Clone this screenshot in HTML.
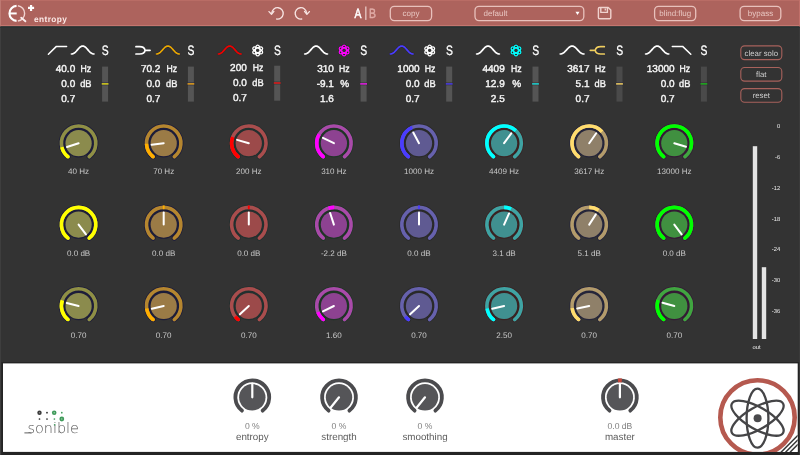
<!DOCTYPE html>
<html lang="en"><head><meta charset="utf-8"><title>EQ+ entropy</title>
<style>html,body{margin:0;padding:0;background:#333;overflow:hidden}svg{display:block;will-change:transform}text{font-family:"Liberation Sans", sans-serif;text-rendering:geometricPrecision}.v{font-size:10px;fill:#f6f6f6;stroke:#f6f6f6;stroke-width:0.4px}.kl{font-size:8.05px;fill:#c8c8c8;text-anchor:middle}.hb{font-size:8px;fill:#e8c6c1;text-anchor:middle}.sb{font-size:7.8px;fill:#cfcfcf;text-anchor:middle}.ml{font-size:5.8px;fill:#f0f0f0;text-anchor:end}.bv{font-size:8.6px;fill:#808080;text-anchor:middle}.bl{font-size:9.8px;fill:#5c5c5c;text-anchor:middle}</style></head><body>
<svg width="800" height="455" viewBox="0 0 800 455">
<rect width="800" height="455" fill="#333333"/>
<rect x="0" y="27" width="1" height="428" fill="#3e3e3e"/>
<rect x="799" y="27" width="1" height="428" fill="#3a3a3a"/>
<g id="header">
<rect x="0" y="0" width="800" height="26.3" fill="#ad635d"/>
<rect x="0" y="0" width="800" height="1" fill="#b96c65"/>
<rect x="0" y="25" width="800" height="1.3" fill="#c3766f"/>
<rect x="0" y="26.3" width="800" height="1.4" fill="#263233"/>
<rect x="0" y="0" width="1" height="26.3" fill="#be7972"/>
<rect x="799" y="0" width="1" height="26.4" fill="#c0706a"/>
<g fill="none" stroke-linecap="butt">
<path d="M16.56 5.91A7.5 7.5 0 0 0 16.56 20.89" stroke="#fff" stroke-width="2.1"/>
<path d="M9.8 13.45H16.7" stroke="#fff" stroke-width="2"/>
<path d="M17.89 5.76A7.7 7.7 0 0 1 17.89 21.04" stroke="#f1d3d0" stroke-width="1.4"/>
<path d="M21.2 17.7L25.4 21.3" stroke="#fbeeee" stroke-width="1.8" stroke-linecap="round"/>
</g>
<path d="M28 7.95H34.1M31.05 5V11" stroke="#fff" stroke-width="2.2" fill="none"/>
<text x="34" y="22.2" font-size="8.3" font-weight="bold" fill="#fbe9e7" letter-spacing="0.4">entropy</text>
<g transform="translate(277.4 13.3) scale(1 1)" fill="none" stroke="#f7e4e2" stroke-width="1.35" stroke-linecap="round" stroke-linejoin="round"><path d="M-5.57 -0.50A5.7 5.7 0 1 1 -0.69 5.74"/><path d="M-8.4 -1.7L-5.9 0.9L-3.5 -1.9"/></g>
<g transform="translate(301.0 13.3) scale(-1 1)" fill="none" stroke="#f7e4e2" stroke-width="1.35" stroke-linecap="round" stroke-linejoin="round"><path d="M-5.57 -0.50A5.7 5.7 0 1 1 -0.69 5.74"/><path d="M-8.4 -1.7L-5.9 0.9L-3.5 -1.9"/></g>
<text x="354.4" y="17.95" font-size="13.4" fill="#fff" stroke="#fff" stroke-width="0.55" textLength="6.9" lengthAdjust="spacingAndGlyphs">A</text>
<rect x="365.3" y="6.5" width="1.1" height="13.4" fill="#f2dcd9"/>
<text x="369" y="17.95" font-size="13.4" fill="#e0aca7" stroke="#e0aca7" stroke-width="0.45" textLength="7" lengthAdjust="spacingAndGlyphs">B</text>
<rect x="390.3" y="6.4" width="41.3" height="14.2" rx="4" fill="none" stroke="#e8c1bc" stroke-width="1.3"/><text class="hb" x="411.0" y="16.1">copy</text>
<rect x="475" y="6.4" width="108.8" height="14.2" rx="4" fill="none" stroke="#e8c1bc" stroke-width="1.3"/>
<text class="hb" x="483.5" y="16.1" style="text-anchor:start">default</text>
<path d="M575.5 11.8H579.5L577.5 15Z" fill="#fff"/>
<g fill="none" stroke="#f0d2ce" stroke-width="1.4" stroke-linejoin="round"><path d="M599.6 7.5H608.2L610.8 10.1V17.6Q610.8 18.8 609.6 18.8H599.6Q598.4 18.8 598.4 17.6V8.7Q598.4 7.5 599.6 7.5Z"/><path d="M600.8 7.7V12.4H607.4V7.7"/><path d="M605.3 8.6V10.6" stroke-width="1.3"/></g>
<rect x="654.6" y="6.4" width="41.1" height="14.2" rx="4" fill="none" stroke="#e8c1bc" stroke-width="1.3"/><text class="hb" x="675.2" y="16.1">blind:flug</text>
<rect x="740.1" y="6.4" width="40.7" height="14.2" rx="4" fill="none" stroke="#e8c1bc" stroke-width="1.3"/><text class="hb" x="760.5" y="16.1">bypass</text>
</g>
<g id="bands">
<g>
<path d="M48.4 54.3L56.4 46.4H66.6" fill="none" stroke="#fff" stroke-width="1.5" stroke-linecap="round" stroke-linejoin="round"/>
<path d="M71.40 54.00L72.21 53.94L73.01 53.72L73.82 53.33L74.63 52.77L75.44 52.05L76.24 51.22L77.05 50.32L77.86 49.39L78.66 48.49L79.47 47.67L80.28 46.97L81.09 46.44L81.89 46.11L82.70 46.00L83.51 46.11L84.31 46.44L85.12 46.97L85.93 47.67L86.74 48.49L87.54 49.39L88.35 50.32L89.16 51.22L89.96 52.05L90.77 52.77L91.58 53.33L92.39 53.72L93.19 53.94L94.00 54.00" fill="none" stroke="#fff" stroke-width="1.7" stroke-linecap="round" stroke-linejoin="round"/>
<text x="101.8" y="54.9" font-size="13.6" fill="#fff" stroke="#fff" stroke-width="0.3" textLength="6.9" lengthAdjust="spacingAndGlyphs">S</text>
</g><g transform="translate(0 0)">
<text class="v" transform="translate(75.2 72.1) scale(1.0 1)" text-anchor="end">40.0</text>
<text class="v" x="80.6" y="72.1" textLength="10.6" lengthAdjust="spacingAndGlyphs">Hz</text>
<text class="v" transform="translate(75.2 87.3) scale(1.0 1)" text-anchor="end">0.0</text>
<text class="v" x="80.2" y="87.3" textLength="11.3" lengthAdjust="spacingAndGlyphs">dB</text>
<text class="v" transform="translate(75.2 102.1) scale(1.0 1)" text-anchor="end">0.7</text>
<rect x="102.1" y="66.6" width="6" height="35" fill="#555555"/>
<rect x="101.5" y="82.6" width="7.2" height="2.6" fill="#1d1d3a"/>
<rect x="101.7" y="83.1" width="6.8" height="1.6" fill="#d8d020"/>
</g>
<g>
<g transform="translate(135.1 0)" fill="none" stroke-linecap="round"><path d="M0.85 46.65H4.6C7.9 46.65 9.6 48.3 10 50.3H14.95M0.85 54H4.6C7.9 54 9.6 52.3 10 50.3" stroke="#fff" stroke-width="1.7"/></g>
<path d="M156.40 54.00L157.22 53.94L158.04 53.72L158.86 53.33L159.69 52.77L160.51 52.05L161.33 51.22L162.15 50.32L162.97 49.39L163.79 48.49L164.61 47.67L165.44 46.97L166.26 46.44L167.08 46.11L167.90 46.00L168.72 46.11L169.54 46.44L170.36 46.97L171.19 47.67L172.01 48.49L172.83 49.39L173.65 50.32L174.47 51.22L175.29 52.05L176.11 52.77L176.94 53.33L177.76 53.72L178.58 53.94L179.40 54.00" fill="none" stroke="#1d1d3a" stroke-width="2.6" stroke-linecap="round" stroke-linejoin="round"/><path d="M156.40 54.00L157.22 53.94L158.04 53.72L158.86 53.33L159.69 52.77L160.51 52.05L161.33 51.22L162.15 50.32L162.97 49.39L163.79 48.49L164.61 47.67L165.44 46.97L166.26 46.44L167.08 46.11L167.90 46.00L168.72 46.11L169.54 46.44L170.36 46.97L171.19 47.67L172.01 48.49L172.83 49.39L173.65 50.32L174.47 51.22L175.29 52.05L176.11 52.77L176.94 53.33L177.76 53.72L178.58 53.94L179.40 54.00" fill="none" stroke="#e8a800" stroke-width="1.7" stroke-linecap="round" stroke-linejoin="round"/>
<text x="187.6" y="54.9" font-size="13.6" fill="#fff" stroke="#fff" stroke-width="0.3" textLength="6.9" lengthAdjust="spacingAndGlyphs">S</text>
</g><g transform="translate(0 0)">
<text class="v" transform="translate(160.4 72.1) scale(1.0 1)" text-anchor="end">70.2</text>
<text class="v" x="166.4" y="72.1" textLength="10.6" lengthAdjust="spacingAndGlyphs">Hz</text>
<text class="v" transform="translate(160.4 87.3) scale(1.0 1)" text-anchor="end">0.0</text>
<text class="v" x="166.0" y="87.3" textLength="11.3" lengthAdjust="spacingAndGlyphs">dB</text>
<text class="v" transform="translate(160.4 102.1) scale(1.0 1)" text-anchor="end">0.7</text>
<rect x="187.9" y="66.6" width="6" height="35" fill="#555555"/>
<rect x="187.3" y="82.6" width="7.2" height="2.6" fill="#1d1d3a"/>
<rect x="187.5" y="83.1" width="6.8" height="1.6" fill="#e0a020"/>
</g>
<g>
<path d="M218.30 54.00L219.11 53.94L219.93 53.72L220.74 53.33L221.56 52.77L222.37 52.05L223.19 51.22L224.00 50.32L224.81 49.39L225.63 48.49L226.44 47.67L227.26 46.97L228.07 46.44L228.89 46.11L229.70 46.00L230.51 46.11L231.33 46.44L232.14 46.97L232.96 47.67L233.77 48.49L234.59 49.39L235.40 50.32L236.21 51.22L237.03 52.05L237.84 52.77L238.66 53.33L239.47 53.72L240.29 53.94L241.10 54.00" fill="none" stroke="#23302f" stroke-width="2.6" stroke-linecap="round" stroke-linejoin="round"/><path d="M218.30 54.00L219.11 53.94L219.93 53.72L220.74 53.33L221.56 52.77L222.37 52.05L223.19 51.22L224.00 50.32L224.81 49.39L225.63 48.49L226.44 47.67L227.26 46.97L228.07 46.44L228.89 46.11L229.70 46.00L230.51 46.11L231.33 46.44L232.14 46.97L232.96 47.67L233.77 48.49L234.59 49.39L235.40 50.32L236.21 51.22L237.03 52.05L237.84 52.77L238.66 53.33L239.47 53.72L240.29 53.94L241.10 54.00" fill="none" stroke="#f00000" stroke-width="1.7" stroke-linecap="round" stroke-linejoin="round"/>
<g fill="none" stroke="#fff" stroke-width="1.25"><ellipse cx="257.7" cy="50.4" rx="2.3" ry="5.4" transform="rotate(0 257.7 50.4)"/><ellipse cx="257.7" cy="50.4" rx="2.3" ry="5.4" transform="rotate(60 257.7 50.4)"/><ellipse cx="257.7" cy="50.4" rx="2.3" ry="5.4" transform="rotate(120 257.7 50.4)"/></g>
<text x="273.9" y="54.9" font-size="13.6" fill="#fff" stroke="#fff" stroke-width="0.3" textLength="6.9" lengthAdjust="spacingAndGlyphs">S</text>
</g><g transform="translate(0 -0.9)">
<text class="v" transform="translate(246.8 72.1) scale(1.0 1)" text-anchor="end">200</text>
<text class="v" x="252.7" y="72.1" textLength="10.6" lengthAdjust="spacingAndGlyphs">Hz</text>
<text class="v" transform="translate(246.8 87.3) scale(1.0 1)" text-anchor="end">0.0</text>
<text class="v" x="252.3" y="87.3" textLength="11.3" lengthAdjust="spacingAndGlyphs">dB</text>
<text class="v" transform="translate(246.8 102.1) scale(1.0 1)" text-anchor="end">0.7</text>
<rect x="274.2" y="66.6" width="6" height="35" fill="#555555"/>
<rect x="273.6" y="82.6" width="7.2" height="2.6" fill="#23302f"/>
<rect x="273.8" y="83.1" width="6.8" height="1.6" fill="#e02020"/>
</g>
<g>
<path d="M304.70 54.00L305.51 53.94L306.33 53.72L307.14 53.33L307.96 52.77L308.77 52.05L309.59 51.22L310.40 50.32L311.21 49.39L312.03 48.49L312.84 47.67L313.66 46.97L314.47 46.44L315.29 46.11L316.10 46.00L316.91 46.11L317.73 46.44L318.54 46.97L319.36 47.67L320.17 48.49L320.99 49.39L321.80 50.32L322.61 51.22L323.43 52.05L324.24 52.77L325.06 53.33L325.87 53.72L326.69 53.94L327.50 54.00" fill="none" stroke="#fff" stroke-width="1.7" stroke-linecap="round" stroke-linejoin="round"/>
<g fill="none" stroke="#0c3a0c" stroke-width="2.2"><ellipse cx="344.1" cy="50.4" rx="2.3" ry="5.4" transform="rotate(0 344.1 50.4)"/><ellipse cx="344.1" cy="50.4" rx="2.3" ry="5.4" transform="rotate(60 344.1 50.4)"/><ellipse cx="344.1" cy="50.4" rx="2.3" ry="5.4" transform="rotate(120 344.1 50.4)"/></g><g fill="none" stroke="#ff00ff" stroke-width="1.25"><ellipse cx="344.1" cy="50.4" rx="2.3" ry="5.4" transform="rotate(0 344.1 50.4)"/><ellipse cx="344.1" cy="50.4" rx="2.3" ry="5.4" transform="rotate(60 344.1 50.4)"/><ellipse cx="344.1" cy="50.4" rx="2.3" ry="5.4" transform="rotate(120 344.1 50.4)"/></g>
<text x="360.3" y="54.9" font-size="13.6" fill="#fff" stroke="#fff" stroke-width="0.3" textLength="6.9" lengthAdjust="spacingAndGlyphs">S</text>
</g><g transform="translate(0 0)">
<text class="v" transform="translate(333.9 72.1) scale(1.0 1)" text-anchor="end">310</text>
<text class="v" x="339.1" y="72.1" textLength="10.6" lengthAdjust="spacingAndGlyphs">Hz</text>
<text class="v" transform="translate(333.9 87.3) scale(1.0 1)" text-anchor="end">-9.1</text>
<text class="v" x="340.3" y="87.3">%</text>
<text class="v" transform="translate(333.9 102.1) scale(1.0 1)" text-anchor="end">1.6</text>
<rect x="360.6" y="66.6" width="6" height="35" fill="#555555"/>
<rect x="360.0" y="82.6" width="7.2" height="2.6" fill="#1f3526"/>
<rect x="360.2" y="83.1" width="6.8" height="1.6" fill="#e020e0"/>
</g>
<g>
<path d="M390.30 54.00L391.11 53.94L391.93 53.72L392.74 53.33L393.56 52.77L394.37 52.05L395.19 51.22L396.00 50.32L396.81 49.39L397.63 48.49L398.44 47.67L399.26 46.97L400.07 46.44L400.89 46.11L401.70 46.00L402.51 46.11L403.33 46.44L404.14 46.97L404.96 47.67L405.77 48.49L406.59 49.39L407.40 50.32L408.21 51.22L409.03 52.05L409.84 52.77L410.66 53.33L411.47 53.72L412.29 53.94L413.10 54.00" fill="none" stroke="#2a2a2a" stroke-width="2.6" stroke-linecap="round" stroke-linejoin="round"/><path d="M390.30 54.00L391.11 53.94L391.93 53.72L392.74 53.33L393.56 52.77L394.37 52.05L395.19 51.22L396.00 50.32L396.81 49.39L397.63 48.49L398.44 47.67L399.26 46.97L400.07 46.44L400.89 46.11L401.70 46.00L402.51 46.11L403.33 46.44L404.14 46.97L404.96 47.67L405.77 48.49L406.59 49.39L407.40 50.32L408.21 51.22L409.03 52.05L409.84 52.77L410.66 53.33L411.47 53.72L412.29 53.94L413.10 54.00" fill="none" stroke="#4a3cff" stroke-width="1.7" stroke-linecap="round" stroke-linejoin="round"/>
<g fill="none" stroke="#fff" stroke-width="1.25"><ellipse cx="429.7" cy="50.4" rx="2.3" ry="5.4" transform="rotate(0 429.7 50.4)"/><ellipse cx="429.7" cy="50.4" rx="2.3" ry="5.4" transform="rotate(60 429.7 50.4)"/><ellipse cx="429.7" cy="50.4" rx="2.3" ry="5.4" transform="rotate(120 429.7 50.4)"/></g>
<text x="445.9" y="54.9" font-size="13.6" fill="#fff" stroke="#fff" stroke-width="0.3" textLength="6.9" lengthAdjust="spacingAndGlyphs">S</text>
</g><g transform="translate(0 0)">
<text class="v" transform="translate(419.6 72.1) scale(1.0 1)" text-anchor="end">1000</text>
<text class="v" x="424.7" y="72.1" textLength="10.6" lengthAdjust="spacingAndGlyphs">Hz</text>
<text class="v" transform="translate(419.6 87.3) scale(1.0 1)" text-anchor="end">0.0</text>
<text class="v" x="424.3" y="87.3" textLength="11.3" lengthAdjust="spacingAndGlyphs">dB</text>
<text class="v" transform="translate(419.6 102.1) scale(1.0 1)" text-anchor="end">0.7</text>
<rect x="446.2" y="66.6" width="6" height="35" fill="#555555"/>
<rect x="445.6" y="82.6" width="7.2" height="2.6" fill="#2a2a2a"/>
<rect x="445.8" y="83.1" width="6.8" height="1.6" fill="#4a3ce0"/>
</g>
<g>
<path d="M476.60 54.00L477.41 53.94L478.23 53.72L479.04 53.33L479.86 52.77L480.67 52.05L481.49 51.22L482.30 50.32L483.11 49.39L483.93 48.49L484.74 47.67L485.56 46.97L486.37 46.44L487.19 46.11L488.00 46.00L488.81 46.11L489.63 46.44L490.44 46.97L491.26 47.67L492.07 48.49L492.89 49.39L493.70 50.32L494.51 51.22L495.33 52.05L496.14 52.77L496.96 53.33L497.77 53.72L498.59 53.94L499.40 54.00" fill="none" stroke="#fff" stroke-width="1.7" stroke-linecap="round" stroke-linejoin="round"/>
<g fill="none" stroke="#3a1010" stroke-width="2.2"><ellipse cx="516.0" cy="50.4" rx="2.3" ry="5.4" transform="rotate(0 516.0 50.4)"/><ellipse cx="516.0" cy="50.4" rx="2.3" ry="5.4" transform="rotate(60 516.0 50.4)"/><ellipse cx="516.0" cy="50.4" rx="2.3" ry="5.4" transform="rotate(120 516.0 50.4)"/></g><g fill="none" stroke="#00ffff" stroke-width="1.25"><ellipse cx="516.0" cy="50.4" rx="2.3" ry="5.4" transform="rotate(0 516.0 50.4)"/><ellipse cx="516.0" cy="50.4" rx="2.3" ry="5.4" transform="rotate(60 516.0 50.4)"/><ellipse cx="516.0" cy="50.4" rx="2.3" ry="5.4" transform="rotate(120 516.0 50.4)"/></g>
<text x="532.2" y="54.9" font-size="13.6" fill="#fff" stroke="#fff" stroke-width="0.3" textLength="6.9" lengthAdjust="spacingAndGlyphs">S</text>
</g><g transform="translate(0 0)">
<text class="v" transform="translate(504.7 72.1) scale(1.0 1)" text-anchor="end">4409</text>
<text class="v" x="511.0" y="72.1" textLength="10.6" lengthAdjust="spacingAndGlyphs">Hz</text>
<text class="v" transform="translate(504.7 87.3) scale(1.0 1)" text-anchor="end">12.9</text>
<text class="v" x="512.2" y="87.3">%</text>
<text class="v" transform="translate(504.7 102.1) scale(1.0 1)" text-anchor="end">2.5</text>
<rect x="532.5" y="66.6" width="6" height="35" fill="#555555"/>
<rect x="531.9" y="82.6" width="7.2" height="2.6" fill="#3a2222"/>
<rect x="532.1" y="83.1" width="6.8" height="1.6" fill="#20d0d0"/>
</g>
<g>
<path d="M560.20 54.00L561.05 53.94L561.90 53.72L562.75 53.33L563.60 52.77L564.45 52.05L565.30 51.22L566.15 50.32L567.00 49.39L567.85 48.49L568.70 47.67L569.55 46.97L570.40 46.44L571.25 46.11L572.10 46.00L572.95 46.11L573.80 46.44L574.65 46.97L575.50 47.67L576.35 48.49L577.20 49.39L578.05 50.32L578.90 51.22L579.75 52.05L580.60 52.77L581.45 53.33L582.30 53.72L583.15 53.94L584.00 54.00" fill="none" stroke="#fff" stroke-width="1.7" stroke-linecap="round" stroke-linejoin="round"/>
<g transform="translate(605.2 0) scale(-1 1)" fill="none" stroke-linecap="round"><path d="M0.85 46.65H4.6C7.9 46.65 9.6 48.3 10 50.3H14.95M0.85 54H4.6C7.9 54 9.6 52.3 10 50.3" stroke="#25253a" stroke-width="2.6"/><path d="M0.85 46.65H4.6C7.9 46.65 9.6 48.3 10 50.3H14.95M0.85 54H4.6C7.9 54 9.6 52.3 10 50.3" stroke="#f0cf5c" stroke-width="1.7"/></g>
<text x="616.2" y="54.9" font-size="13.6" fill="#fff" stroke="#fff" stroke-width="0.3" textLength="6.9" lengthAdjust="spacingAndGlyphs">S</text>
</g><g transform="translate(0 0)">
<text class="v" transform="translate(589.5 72.1) scale(1.0 1)" text-anchor="end">3617</text>
<text class="v" x="595.0" y="72.1" textLength="10.6" lengthAdjust="spacingAndGlyphs">Hz</text>
<text class="v" transform="translate(589.5 87.3) scale(1.0 1)" text-anchor="end">5.1</text>
<text class="v" x="594.6" y="87.3" textLength="11.3" lengthAdjust="spacingAndGlyphs">dB</text>
<text class="v" transform="translate(589.5 102.1) scale(1.0 1)" text-anchor="end">0.7</text>
<rect x="616.5" y="66.6" width="6" height="35" fill="#4a4a4a"/>
<rect x="615.9" y="82.6" width="7.2" height="2.6" fill="#25253a"/>
<rect x="616.1" y="83.1" width="6.8" height="1.6" fill="#e8c860"/>
</g>
<g>
<path d="M645.60 54.00L646.43 53.94L647.26 53.72L648.09 53.33L648.91 52.77L649.74 52.05L650.57 51.22L651.40 50.32L652.23 49.39L653.06 48.49L653.89 47.67L654.71 46.97L655.54 46.44L656.37 46.11L657.20 46.00L658.03 46.11L658.86 46.44L659.69 46.97L660.51 47.67L661.34 48.49L662.17 49.39L663.00 50.32L663.83 51.22L664.66 52.05L665.49 52.77L666.31 53.33L667.14 53.72L667.97 53.94L668.80 54.00" fill="none" stroke="#fff" stroke-width="1.7" stroke-linecap="round" stroke-linejoin="round"/>
<path d="M672.3 46.4H682.6L690.8 54.3" fill="none" stroke="#fff" stroke-width="1.5" stroke-linecap="round" stroke-linejoin="round"/>
<text x="700.6" y="54.9" font-size="13.6" fill="#fff" stroke="#fff" stroke-width="0.3" textLength="6.9" lengthAdjust="spacingAndGlyphs">S</text>
</g><g transform="translate(0 0)">
<text class="v" transform="translate(674.6 72.1) scale(1.0 1)" text-anchor="end">13000</text>
<text class="v" x="679.4" y="72.1" textLength="10.6" lengthAdjust="spacingAndGlyphs">Hz</text>
<text class="v" transform="translate(674.6 87.3) scale(1.0 1)" text-anchor="end">0.0</text>
<text class="v" x="679.0" y="87.3" textLength="11.3" lengthAdjust="spacingAndGlyphs">dB</text>
<text class="v" transform="translate(674.6 102.1) scale(1.0 1)" text-anchor="end">0.7</text>
<rect x="700.9" y="66.6" width="6" height="35" fill="#4a4a4a"/>
<rect x="700.3" y="82.6" width="7.2" height="2.6" fill="#351a35"/>
<rect x="700.5" y="83.1" width="6.8" height="1.6" fill="#20b020"/>
</g>
</g>
<g id="side">
<rect x="740.8" y="45.9" width="41" height="13.7" rx="3.8" fill="none" stroke="#a8625c" stroke-width="1.1"/>
<text class="sb" x="761.3" y="55.5">clear solo</text>
<rect x="740.8" y="67.5" width="41" height="13.6" rx="3.8" fill="none" stroke="#a8625c" stroke-width="1.1"/>
<text class="sb" x="761.3" y="77.0">flat</text>
<rect x="740.8" y="88.6" width="41" height="13.6" rx="3.8" fill="none" stroke="#a8625c" stroke-width="1.1"/>
<text class="sb" x="761.3" y="98.1">reset</text>
</g>
<g id="knobs">
<path d="M68.01 156.75A17.2 17.2 0 1 1 89.19 156.75" fill="none" stroke="#1d1d3a" stroke-width="5.2" stroke-linecap="round"/><path d="M70.10 155.80A15.2 15.2 0 1 1 87.10 155.80" fill="none" stroke="#1d1d3a" stroke-width="2.8"/><circle cx="78.6" cy="143.2" r="14.2" fill="#1d1d3a"/><path d="M68.01 156.75A17.2 17.2 0 1 1 89.19 156.75" fill="none" stroke="#8f8f45" stroke-width="3.6" stroke-linecap="round"/><path d="M68.01 156.75A17.2 17.2 0 0 1 61.84 147.07" fill="none" stroke="#ffff00" stroke-width="3.6" stroke-linecap="butt"/><circle cx="68.01" cy="156.75" r="1.8" fill="#ffff00"/><circle cx="78.6" cy="143.2" r="13.1" fill="#8b8b4d"/><line x1="78.6" y1="143.2" x2="67.00" y2="146.97" stroke="#fff" stroke-width="2" stroke-linecap="round"/>
<text class="kl" x="78.6" y="174.2">40 Hz</text>
<path d="M153.11 156.75A17.2 17.2 0 1 1 174.29 156.75" fill="none" stroke="#1d1d3a" stroke-width="5.2" stroke-linecap="round"/><path d="M155.20 155.80A15.2 15.2 0 1 1 172.20 155.80" fill="none" stroke="#1d1d3a" stroke-width="2.8"/><circle cx="163.7" cy="143.2" r="14.2" fill="#1d1d3a"/><path d="M153.11 156.75A17.2 17.2 0 1 1 174.29 156.75" fill="none" stroke="#b5862f" stroke-width="3.6" stroke-linecap="round"/><path d="M153.11 156.75A17.2 17.2 0 0 1 146.51 143.80" fill="none" stroke="#ffae00" stroke-width="3.6" stroke-linecap="butt"/><circle cx="153.11" cy="156.75" r="1.8" fill="#ffae00"/><circle cx="163.7" cy="143.2" r="13.1" fill="#9b7b46"/><line x1="163.7" y1="143.2" x2="151.59" y2="144.69" stroke="#fff" stroke-width="2" stroke-linecap="round"/>
<text class="kl" x="163.7" y="174.2">70 Hz</text>
<path d="M238.21 156.75A17.2 17.2 0 1 1 259.39 156.75" fill="none" stroke="#23302f" stroke-width="5.2" stroke-linecap="round"/><path d="M240.30 155.80A15.2 15.2 0 1 1 257.30 155.80" fill="none" stroke="#23302f" stroke-width="2.8"/><circle cx="248.8" cy="143.2" r="14.2" fill="#23302f"/><path d="M238.21 156.75A17.2 17.2 0 1 1 259.39 156.75" fill="none" stroke="#a94d4d" stroke-width="3.6" stroke-linecap="round"/><path d="M238.21 156.75A17.2 17.2 0 0 1 232.74 137.04" fill="none" stroke="#ff0000" stroke-width="3.6" stroke-linecap="butt"/><circle cx="238.21" cy="156.75" r="1.8" fill="#ff0000"/><circle cx="248.8" cy="143.2" r="13.1" fill="#9c4a4a"/><line x1="248.8" y1="143.2" x2="237.07" y2="139.84" stroke="#fff" stroke-width="2" stroke-linecap="round"/>
<text class="kl" x="248.8" y="174.2">200 Hz</text>
<path d="M323.31 156.75A17.2 17.2 0 1 1 344.49 156.75" fill="none" stroke="#1f3526" stroke-width="5.2" stroke-linecap="round"/><path d="M325.40 155.80A15.2 15.2 0 1 1 342.40 155.80" fill="none" stroke="#1f3526" stroke-width="2.8"/><circle cx="333.9" cy="143.2" r="14.2" fill="#1f3526"/><path d="M323.31 156.75A17.2 17.2 0 1 1 344.49 156.75" fill="none" stroke="#a94aa9" stroke-width="3.6" stroke-linecap="round"/><path d="M323.31 156.75A17.2 17.2 0 0 1 319.16 134.34" fill="none" stroke="#ff00ff" stroke-width="3.6" stroke-linecap="butt"/><circle cx="323.31" cy="156.75" r="1.8" fill="#ff00ff"/><circle cx="333.9" cy="143.2" r="13.1" fill="#8d4291"/><line x1="333.9" y1="143.2" x2="322.93" y2="137.85" stroke="#fff" stroke-width="2" stroke-linecap="round"/>
<text class="kl" x="333.9" y="174.2">310 Hz</text>
<path d="M408.41 156.75A17.2 17.2 0 1 1 429.59 156.75" fill="none" stroke="#2a2a2a" stroke-width="5.2" stroke-linecap="round"/><path d="M410.50 155.80A15.2 15.2 0 1 1 427.50 155.80" fill="none" stroke="#2a2a2a" stroke-width="2.8"/><circle cx="419.0" cy="143.2" r="14.2" fill="#2a2a2a"/><path d="M408.41 156.75A17.2 17.2 0 1 1 429.59 156.75" fill="none" stroke="#6661ad" stroke-width="3.6" stroke-linecap="round"/><path d="M408.41 156.75A17.2 17.2 0 0 1 412.28 127.37" fill="none" stroke="#4a3cff" stroke-width="3.6" stroke-linecap="butt"/><circle cx="408.41" cy="156.75" r="1.8" fill="#4a3cff"/><circle cx="419.0" cy="143.2" r="13.1" fill="#5f5a92"/><line x1="419.0" y1="143.2" x2="413.27" y2="132.43" stroke="#fff" stroke-width="2" stroke-linecap="round"/>
<text class="kl" x="419.0" y="174.2">1000 Hz</text>
<path d="M493.51 156.75A17.2 17.2 0 1 1 514.69 156.75" fill="none" stroke="#3a2222" stroke-width="5.2" stroke-linecap="round"/><path d="M495.60 155.80A15.2 15.2 0 1 1 512.60 155.80" fill="none" stroke="#3a2222" stroke-width="2.8"/><circle cx="504.1" cy="143.2" r="14.2" fill="#3a2222"/><path d="M493.51 156.75A17.2 17.2 0 1 1 514.69 156.75" fill="none" stroke="#3fa3a3" stroke-width="3.6" stroke-linecap="round"/><path d="M493.51 156.75A17.2 17.2 0 1 1 515.83 130.62" fill="none" stroke="#00ffff" stroke-width="3.6" stroke-linecap="butt"/><circle cx="493.51" cy="156.75" r="1.8" fill="#00ffff"/><circle cx="504.1" cy="143.2" r="13.1" fill="#409090"/><line x1="504.1" y1="143.2" x2="511.27" y2="133.33" stroke="#fff" stroke-width="2" stroke-linecap="round"/>
<text class="kl" x="504.1" y="174.2">4409 Hz</text>
<path d="M578.61 156.75A17.2 17.2 0 1 1 599.79 156.75" fill="none" stroke="#25253a" stroke-width="5.2" stroke-linecap="round"/><path d="M580.70 155.80A15.2 15.2 0 1 1 597.70 155.80" fill="none" stroke="#25253a" stroke-width="2.8"/><circle cx="589.2" cy="143.2" r="14.2" fill="#25253a"/><path d="M578.61 156.75A17.2 17.2 0 1 1 599.79 156.75" fill="none" stroke="#b39b6b" stroke-width="3.6" stroke-linecap="round"/><path d="M578.61 156.75A17.2 17.2 0 1 1 601.98 131.69" fill="none" stroke="#ffdc6e" stroke-width="3.6" stroke-linecap="butt"/><circle cx="578.61" cy="156.75" r="1.8" fill="#ffdc6e"/><circle cx="589.2" cy="143.2" r="13.1" fill="#8f8069"/><line x1="589.2" y1="143.2" x2="596.20" y2="133.21" stroke="#fff" stroke-width="2" stroke-linecap="round"/>
<text class="kl" x="589.2" y="174.2">3617 Hz</text>
<path d="M663.71 156.75A17.2 17.2 0 1 1 684.89 156.75" fill="none" stroke="#351a35" stroke-width="5.2" stroke-linecap="round"/><path d="M665.80 155.80A15.2 15.2 0 1 1 682.80 155.80" fill="none" stroke="#351a35" stroke-width="2.8"/><circle cx="674.3" cy="143.2" r="14.2" fill="#351a35"/><path d="M663.71 156.75A17.2 17.2 0 1 1 684.89 156.75" fill="none" stroke="#40a540" stroke-width="3.6" stroke-linecap="round"/><path d="M663.71 156.75A17.2 17.2 0 1 1 690.25 149.64" fill="none" stroke="#00ff00" stroke-width="3.6" stroke-linecap="butt"/><circle cx="663.71" cy="156.75" r="1.8" fill="#00ff00"/><circle cx="674.3" cy="143.2" r="13.1" fill="#409040"/><line x1="674.3" y1="143.2" x2="685.97" y2="146.77" stroke="#fff" stroke-width="2" stroke-linecap="round"/>
<text class="kl" x="674.3" y="174.2">13000 Hz</text>
<path d="M68.01 238.15A17.2 17.2 0 1 1 89.19 238.15" fill="none" stroke="#1d1d3a" stroke-width="5.2" stroke-linecap="round"/><path d="M70.10 237.20A15.2 15.2 0 1 1 87.10 237.20" fill="none" stroke="#1d1d3a" stroke-width="2.8"/><circle cx="78.6" cy="224.6" r="14.2" fill="#1d1d3a"/><path d="M68.01 238.15A17.2 17.2 0 1 1 89.19 238.15" fill="none" stroke="#8f8f45" stroke-width="3.6" stroke-linecap="round"/><path d="M68.01 238.15A17.2 17.2 0 1 1 89.19 238.15" fill="none" stroke="#ffff00" stroke-width="3.6" stroke-linecap="round"/><circle cx="78.6" cy="224.6" r="13.1" fill="#8b8b4d"/><line x1="78.6" y1="224.6" x2="85.94" y2="234.34" stroke="#fff" stroke-width="2" stroke-linecap="round"/>
<text class="kl" x="78.6" y="256.2">0.0 dB</text>
<path d="M153.11 238.15A17.2 17.2 0 1 1 174.29 238.15" fill="none" stroke="#1d1d3a" stroke-width="5.2" stroke-linecap="round"/><path d="M155.20 237.20A15.2 15.2 0 1 1 172.20 237.20" fill="none" stroke="#1d1d3a" stroke-width="2.8"/><circle cx="163.7" cy="224.6" r="14.2" fill="#1d1d3a"/><path d="M153.11 238.15A17.2 17.2 0 1 1 174.29 238.15" fill="none" stroke="#b5862f" stroke-width="3.6" stroke-linecap="round"/><path d="M162.80 207.42A17.2 17.2 0 0 1 164.60 207.42" fill="none" stroke="#ffae00" stroke-width="3.6" stroke-linecap="butt"/><circle cx="163.7" cy="224.6" r="13.1" fill="#9b7b46"/><line x1="163.7" y1="224.6" x2="163.70" y2="212.40" stroke="#fff" stroke-width="2" stroke-linecap="round"/>
<text class="kl" x="163.7" y="256.2">0.0 dB</text>
<path d="M238.21 238.15A17.2 17.2 0 1 1 259.39 238.15" fill="none" stroke="#23302f" stroke-width="5.2" stroke-linecap="round"/><path d="M240.30 237.20A15.2 15.2 0 1 1 257.30 237.20" fill="none" stroke="#23302f" stroke-width="2.8"/><circle cx="248.8" cy="224.6" r="14.2" fill="#23302f"/><path d="M238.21 238.15A17.2 17.2 0 1 1 259.39 238.15" fill="none" stroke="#a94d4d" stroke-width="3.6" stroke-linecap="round"/><path d="M247.90 207.42A17.2 17.2 0 0 1 249.70 207.42" fill="none" stroke="#ff0000" stroke-width="3.6" stroke-linecap="butt"/><circle cx="248.8" cy="224.6" r="13.1" fill="#9c4a4a"/><line x1="248.8" y1="224.6" x2="248.80" y2="212.40" stroke="#fff" stroke-width="2" stroke-linecap="round"/>
<text class="kl" x="248.8" y="256.2">0.0 dB</text>
<path d="M323.31 238.15A17.2 17.2 0 1 1 344.49 238.15" fill="none" stroke="#1f3526" stroke-width="5.2" stroke-linecap="round"/><path d="M325.40 237.20A15.2 15.2 0 1 1 342.40 237.20" fill="none" stroke="#1f3526" stroke-width="2.8"/><circle cx="333.9" cy="224.6" r="14.2" fill="#1f3526"/><path d="M323.31 238.15A17.2 17.2 0 1 1 344.49 238.15" fill="none" stroke="#a94aa9" stroke-width="3.6" stroke-linecap="round"/><path d="M328.58 208.24A17.2 17.2 0 0 1 334.20 207.40" fill="none" stroke="#ff00ff" stroke-width="3.6" stroke-linecap="butt"/><circle cx="333.9" cy="224.6" r="13.1" fill="#8d4291"/><line x1="333.9" y1="224.6" x2="330.13" y2="213.00" stroke="#fff" stroke-width="2" stroke-linecap="round"/>
<text class="kl" x="333.9" y="256.2">-2.2 dB</text>
<path d="M408.41 238.15A17.2 17.2 0 1 1 429.59 238.15" fill="none" stroke="#2a2a2a" stroke-width="5.2" stroke-linecap="round"/><path d="M410.50 237.20A15.2 15.2 0 1 1 427.50 237.20" fill="none" stroke="#2a2a2a" stroke-width="2.8"/><circle cx="419.0" cy="224.6" r="14.2" fill="#2a2a2a"/><path d="M408.41 238.15A17.2 17.2 0 1 1 429.59 238.15" fill="none" stroke="#6661ad" stroke-width="3.6" stroke-linecap="round"/><path d="M418.10 207.42A17.2 17.2 0 0 1 419.90 207.42" fill="none" stroke="#4a3cff" stroke-width="3.6" stroke-linecap="butt"/><circle cx="419.0" cy="224.6" r="13.1" fill="#5f5a92"/><line x1="419.0" y1="224.6" x2="419.00" y2="212.40" stroke="#fff" stroke-width="2" stroke-linecap="round"/>
<text class="kl" x="419.0" y="256.2">0.0 dB</text>
<path d="M493.51 238.15A17.2 17.2 0 1 1 514.69 238.15" fill="none" stroke="#3a2222" stroke-width="5.2" stroke-linecap="round"/><path d="M495.60 237.20A15.2 15.2 0 1 1 512.60 237.20" fill="none" stroke="#3a2222" stroke-width="2.8"/><circle cx="504.1" cy="224.6" r="14.2" fill="#3a2222"/><path d="M493.51 238.15A17.2 17.2 0 1 1 514.69 238.15" fill="none" stroke="#3fa3a3" stroke-width="3.6" stroke-linecap="round"/><path d="M504.10 207.40A17.2 17.2 0 0 1 511.10 208.89" fill="none" stroke="#00ffff" stroke-width="3.6" stroke-linecap="butt"/><circle cx="504.1" cy="224.6" r="13.1" fill="#409090"/><line x1="504.1" y1="224.6" x2="509.06" y2="213.45" stroke="#fff" stroke-width="2" stroke-linecap="round"/>
<text class="kl" x="504.1" y="256.2">3.1 dB</text>
<path d="M578.61 238.15A17.2 17.2 0 1 1 599.79 238.15" fill="none" stroke="#25253a" stroke-width="5.2" stroke-linecap="round"/><path d="M580.70 237.20A15.2 15.2 0 1 1 597.70 237.20" fill="none" stroke="#25253a" stroke-width="2.8"/><circle cx="589.2" cy="224.6" r="14.2" fill="#25253a"/><path d="M578.61 238.15A17.2 17.2 0 1 1 599.79 238.15" fill="none" stroke="#b39b6b" stroke-width="3.6" stroke-linecap="round"/><path d="M589.20 207.40A17.2 17.2 0 0 1 598.57 210.17" fill="none" stroke="#ffdc6e" stroke-width="3.6" stroke-linecap="butt"/><circle cx="589.2" cy="224.6" r="13.1" fill="#8f8069"/><line x1="589.2" y1="224.6" x2="595.84" y2="214.37" stroke="#fff" stroke-width="2" stroke-linecap="round"/>
<text class="kl" x="589.2" y="256.2">5.1 dB</text>
<path d="M663.71 238.15A17.2 17.2 0 1 1 684.89 238.15" fill="none" stroke="#351a35" stroke-width="5.2" stroke-linecap="round"/><path d="M665.80 237.20A15.2 15.2 0 1 1 682.80 237.20" fill="none" stroke="#351a35" stroke-width="2.8"/><circle cx="674.3" cy="224.6" r="14.2" fill="#351a35"/><path d="M663.71 238.15A17.2 17.2 0 1 1 684.89 238.15" fill="none" stroke="#40a540" stroke-width="3.6" stroke-linecap="round"/><path d="M663.71 238.15A17.2 17.2 0 1 1 684.89 238.15" fill="none" stroke="#00ff00" stroke-width="3.6" stroke-linecap="round"/><circle cx="674.3" cy="224.6" r="13.1" fill="#409040"/><line x1="674.3" y1="224.6" x2="681.64" y2="234.34" stroke="#fff" stroke-width="2" stroke-linecap="round"/>
<text class="kl" x="674.3" y="256.2">0.0 dB</text>
<path d="M68.01 319.55A17.2 17.2 0 1 1 89.19 319.55" fill="none" stroke="#1d1d3a" stroke-width="5.2" stroke-linecap="round"/><path d="M70.10 318.60A15.2 15.2 0 1 1 87.10 318.60" fill="none" stroke="#1d1d3a" stroke-width="2.8"/><circle cx="78.6" cy="306.0" r="14.2" fill="#1d1d3a"/><path d="M68.01 319.55A17.2 17.2 0 1 1 89.19 319.55" fill="none" stroke="#8f8f45" stroke-width="3.6" stroke-linecap="round"/><path d="M68.01 319.55A17.2 17.2 0 0 1 62.34 300.40" fill="none" stroke="#ffff00" stroke-width="3.6" stroke-linecap="butt"/><circle cx="68.01" cy="319.55" r="1.8" fill="#ffff00"/><circle cx="78.6" cy="306.0" r="13.1" fill="#8b8b4d"/><line x1="78.6" y1="306.0" x2="66.76" y2="303.05" stroke="#fff" stroke-width="2" stroke-linecap="round"/>
<text class="kl" x="78.6" y="338.2">0.70</text>
<path d="M153.11 319.55A17.2 17.2 0 1 1 174.29 319.55" fill="none" stroke="#1d1d3a" stroke-width="5.2" stroke-linecap="round"/><path d="M155.20 318.60A15.2 15.2 0 1 1 172.20 318.60" fill="none" stroke="#1d1d3a" stroke-width="2.8"/><circle cx="163.7" cy="306.0" r="14.2" fill="#1d1d3a"/><path d="M153.11 319.55A17.2 17.2 0 1 1 174.29 319.55" fill="none" stroke="#b5862f" stroke-width="3.6" stroke-linecap="round"/><path d="M153.11 319.55A17.2 17.2 0 0 1 146.67 308.39" fill="none" stroke="#ffae00" stroke-width="3.6" stroke-linecap="butt"/><circle cx="153.11" cy="319.55" r="1.8" fill="#ffae00"/><circle cx="163.7" cy="306.0" r="13.1" fill="#9b7b46"/><line x1="163.7" y1="306.0" x2="151.81" y2="308.74" stroke="#fff" stroke-width="2" stroke-linecap="round"/>
<text class="kl" x="163.7" y="338.2">0.70</text>
<path d="M238.21 319.55A17.2 17.2 0 1 1 259.39 319.55" fill="none" stroke="#23302f" stroke-width="5.2" stroke-linecap="round"/><path d="M240.30 318.60A15.2 15.2 0 1 1 257.30 318.60" fill="none" stroke="#23302f" stroke-width="2.8"/><circle cx="248.8" cy="306.0" r="14.2" fill="#23302f"/><path d="M238.21 319.55A17.2 17.2 0 1 1 259.39 319.55" fill="none" stroke="#a94d4d" stroke-width="3.6" stroke-linecap="round"/><path d="M238.21 319.55A17.2 17.2 0 0 1 235.25 316.59" fill="none" stroke="#ff0000" stroke-width="3.6" stroke-linecap="butt"/><circle cx="238.21" cy="319.55" r="1.8" fill="#ff0000"/><circle cx="248.8" cy="306.0" r="13.1" fill="#9c4a4a"/><line x1="248.8" y1="306.0" x2="239.88" y2="314.32" stroke="#fff" stroke-width="2" stroke-linecap="round"/>
<text class="kl" x="248.8" y="338.2">0.70</text>
<path d="M323.31 319.55A17.2 17.2 0 1 1 344.49 319.55" fill="none" stroke="#1f3526" stroke-width="5.2" stroke-linecap="round"/><path d="M325.40 318.60A15.2 15.2 0 1 1 342.40 318.60" fill="none" stroke="#1f3526" stroke-width="2.8"/><circle cx="333.9" cy="306.0" r="14.2" fill="#1f3526"/><path d="M323.31 319.55A17.2 17.2 0 1 1 344.49 319.55" fill="none" stroke="#a94aa9" stroke-width="3.6" stroke-linecap="round"/><path d="M323.31 319.55A17.2 17.2 0 0 1 317.84 312.16" fill="none" stroke="#ff00ff" stroke-width="3.6" stroke-linecap="butt"/><circle cx="323.31" cy="319.55" r="1.8" fill="#ff00ff"/><circle cx="333.9" cy="306.0" r="13.1" fill="#8d4291"/><line x1="333.9" y1="306.0" x2="322.93" y2="311.35" stroke="#fff" stroke-width="2" stroke-linecap="round"/>
<text class="kl" x="333.9" y="338.2">1.60</text>
<path d="M408.41 319.55A17.2 17.2 0 1 1 429.59 319.55" fill="none" stroke="#2a2a2a" stroke-width="5.2" stroke-linecap="round"/><path d="M410.50 318.60A15.2 15.2 0 1 1 427.50 318.60" fill="none" stroke="#2a2a2a" stroke-width="2.8"/><circle cx="419.0" cy="306.0" r="14.2" fill="#2a2a2a"/><path d="M408.41 319.55A17.2 17.2 0 1 1 429.59 319.55" fill="none" stroke="#6661ad" stroke-width="3.6" stroke-linecap="round"/><path d="M408.41 319.55A17.2 17.2 0 0 1 405.45 316.59" fill="none" stroke="#4a3cff" stroke-width="3.6" stroke-linecap="butt"/><circle cx="408.41" cy="319.55" r="1.8" fill="#4a3cff"/><circle cx="419.0" cy="306.0" r="13.1" fill="#5f5a92"/><line x1="419.0" y1="306.0" x2="410.08" y2="314.32" stroke="#fff" stroke-width="2" stroke-linecap="round"/>
<text class="kl" x="419.0" y="338.2">0.70</text>
<path d="M493.51 319.55A17.2 17.2 0 1 1 514.69 319.55" fill="none" stroke="#3a2222" stroke-width="5.2" stroke-linecap="round"/><path d="M495.60 318.60A15.2 15.2 0 1 1 512.60 318.60" fill="none" stroke="#3a2222" stroke-width="2.8"/><circle cx="504.1" cy="306.0" r="14.2" fill="#3a2222"/><path d="M493.51 319.55A17.2 17.2 0 1 1 514.69 319.55" fill="none" stroke="#3fa3a3" stroke-width="3.6" stroke-linecap="round"/><path d="M493.51 319.55A17.2 17.2 0 0 1 487.07 308.39" fill="none" stroke="#00ffff" stroke-width="3.6" stroke-linecap="butt"/><circle cx="493.51" cy="319.55" r="1.8" fill="#00ffff"/><circle cx="504.1" cy="306.0" r="13.1" fill="#409090"/><line x1="504.1" y1="306.0" x2="492.21" y2="308.74" stroke="#fff" stroke-width="2" stroke-linecap="round"/>
<text class="kl" x="504.1" y="338.2">2.50</text>
<path d="M578.61 319.55A17.2 17.2 0 1 1 599.79 319.55" fill="none" stroke="#25253a" stroke-width="5.2" stroke-linecap="round"/><path d="M580.70 318.60A15.2 15.2 0 1 1 597.70 318.60" fill="none" stroke="#25253a" stroke-width="2.8"/><circle cx="589.2" cy="306.0" r="14.2" fill="#25253a"/><path d="M578.61 319.55A17.2 17.2 0 1 1 599.79 319.55" fill="none" stroke="#b39b6b" stroke-width="3.6" stroke-linecap="round"/><path d="M578.61 319.55A17.2 17.2 0 0 1 572.13 308.10" fill="none" stroke="#ffdc6e" stroke-width="3.6" stroke-linecap="butt"/><circle cx="578.61" cy="319.55" r="1.8" fill="#ffdc6e"/><circle cx="589.2" cy="306.0" r="13.1" fill="#8f8069"/><line x1="589.2" y1="306.0" x2="577.27" y2="308.54" stroke="#fff" stroke-width="2" stroke-linecap="round"/>
<text class="kl" x="589.2" y="338.2">0.70</text>
<path d="M663.71 319.55A17.2 17.2 0 1 1 684.89 319.55" fill="none" stroke="#351a35" stroke-width="5.2" stroke-linecap="round"/><path d="M665.80 318.60A15.2 15.2 0 1 1 682.80 318.60" fill="none" stroke="#351a35" stroke-width="2.8"/><circle cx="674.3" cy="306.0" r="14.2" fill="#351a35"/><path d="M663.71 319.55A17.2 17.2 0 1 1 684.89 319.55" fill="none" stroke="#40a540" stroke-width="3.6" stroke-linecap="round"/><path d="M663.71 319.55A17.2 17.2 0 0 1 658.14 300.12" fill="none" stroke="#00ff00" stroke-width="3.6" stroke-linecap="butt"/><circle cx="663.71" cy="319.55" r="1.8" fill="#00ff00"/><circle cx="674.3" cy="306.0" r="13.1" fill="#409040"/><line x1="674.3" y1="306.0" x2="662.52" y2="302.84" stroke="#fff" stroke-width="2" stroke-linecap="round"/>
<text class="kl" x="674.3" y="338.2">0.70</text>
</g>
<g id="meter">
<rect x="752.8" y="146.2" width="4.4" height="192.8" fill="#e4e4e4"/>
<rect x="761.8" y="267.2" width="4.4" height="71.8" fill="#e4e4e4"/>
<text class="ml" x="780.2" y="128.1">0</text>
<text class="ml" x="780.2" y="158.9">-6</text>
<text class="ml" x="780.2" y="189.7">-12</text>
<text class="ml" x="780.2" y="220.6">-18</text>
<text class="ml" x="780.2" y="251.4">-24</text>
<text class="ml" x="780.2" y="282.2">-30</text>
<text class="ml" x="780.2" y="313.0">-36</text>
<text x="756.6" y="349.4" font-size="5.8" fill="#f0f0f0" text-anchor="middle">out</text>
</g>
<g id="bottom">
<rect x="1.4" y="362" width="797.7" height="93" fill="#242424"/>
<rect x="3" y="363.4" width="794.7" height="88.5" fill="#ffffff"/>
<clipPath id="pc"><rect x="3" y="363.4" width="794.7" height="88.5"/></clipPath>
<g>
<circle cx="39.5" cy="412.7" r="2.2" fill="#3a3a3a"/>
<circle cx="47" cy="412.7" r="0.85" fill="#222"/>
<circle cx="54.2" cy="412.7" r="2.3" fill="#3f9a5a"/>
<circle cx="61.8" cy="412.7" r="0.85" fill="#3f9a5a"/>
<circle cx="39.5" cy="419" r="0.85" fill="#222"/>
<circle cx="47" cy="419" r="0.85" fill="#222"/>
<circle cx="54.4" cy="419" r="0.85" fill="#3f9a5a"/>
<circle cx="61.8" cy="419" r="2.4" fill="#3f9a5a"/>
<circle cx="54.7" cy="424.8" r="0.9" fill="#3f9a5a"/>
<circle cx="39.5" cy="412.7" r="0.7" fill="#8a8a8a"/><circle cx="54.2" cy="412.7" r="0.7" fill="#a5d3b3"/><circle cx="61.8" cy="419" r="0.7" fill="#a5d3b3"/>
<path d="M24.4 432.9H31.5" stroke="#606060" stroke-width="1" fill="none"/>
<text x="27.4" y="433.2" font-size="14.4" fill="#555" textLength="51.6" lengthAdjust="spacingAndGlyphs" style="font-family:'DejaVu Sans Light','Liberation Sans',sans-serif;font-weight:200">sonible</text>
</g>
<path d="M241.90 410.62A16.9 16.9 0 1 1 262.70 410.62" fill="none" stroke="#4b4b4e" stroke-width="3.8" stroke-linecap="round"/><circle cx="252.3" cy="397.3" r="13.2" fill="#555558"/><line x1="252.3" y1="397.3" x2="252.30" y2="383.90" stroke="#fff" stroke-width="2.2" stroke-linecap="round"/>
<text class="bv" x="252.3" y="428.7">0 %</text>
<text class="bl" x="252.3" y="439.6">entropy</text>
<path d="M328.60 410.62A16.9 16.9 0 1 1 349.40 410.62" fill="none" stroke="#4b4b4e" stroke-width="3.8" stroke-linecap="round"/><circle cx="339.0" cy="397.3" r="13.2" fill="#555558"/><line x1="339.0" y1="397.3" x2="330.57" y2="407.71" stroke="#fff" stroke-width="2.2" stroke-linecap="round"/>
<text class="bv" x="339.0" y="428.7">0 %</text>
<text class="bl" x="339.0" y="439.6">strength</text>
<path d="M414.60 410.62A16.9 16.9 0 1 1 435.40 410.62" fill="none" stroke="#4b4b4e" stroke-width="3.8" stroke-linecap="round"/><circle cx="425.0" cy="397.3" r="13.2" fill="#555558"/><line x1="425.0" y1="397.3" x2="416.57" y2="407.71" stroke="#fff" stroke-width="2.2" stroke-linecap="round"/>
<text class="bv" x="425.0" y="428.7">0 %</text>
<text class="bl" x="425.0" y="439.6">smoothing</text>
<path d="M609.50 410.62A16.9 16.9 0 1 1 630.30 410.62" fill="none" stroke="#4b4b4e" stroke-width="3.8" stroke-linecap="round"/><path d="M617.99 380.51A16.9 16.9 0 0 1 621.81 380.51" fill="none" stroke="#c4473b" stroke-width="3.8"/><circle cx="619.9" cy="397.3" r="13.2" fill="#555558"/><line x1="619.9" y1="397.3" x2="619.90" y2="383.90" stroke="#fff" stroke-width="2.2" stroke-linecap="round"/>
<text class="bv" x="619.9" y="428.7">0.0 dB</text>
<text class="bl" x="619.9" y="439.6">master</text>
<g clip-path="url(#pc)">
<circle cx="757.5" cy="417.4" r="37.2" fill="none" stroke="#b5594f" stroke-width="4.6"/>
<g fill="none" stroke="#454547" stroke-width="2.3">
<ellipse cx="757.5" cy="418.2" rx="10.9" ry="29.5" transform="rotate(0 757.5 418.2)"/>
<ellipse cx="757.5" cy="418.2" rx="10.9" ry="29.5" transform="rotate(60 757.5 418.2)"/>
<ellipse cx="757.5" cy="418.2" rx="10.9" ry="29.5" transform="rotate(120 757.5 418.2)"/>
</g>
<circle cx="757.6" cy="418.2" r="4" fill="#4a4a4c"/>
<path d="M780.5 451.9L797.7 434.7V451.9Z" fill="#fff"/>
<path d="M781 452.3L798 435.3M785.5 452.3L798 439.8M790 452.3L798 444.3" stroke="#3a3a3a" stroke-width="1.5" fill="none"/>
</g>
</g>
</svg></body></html>
